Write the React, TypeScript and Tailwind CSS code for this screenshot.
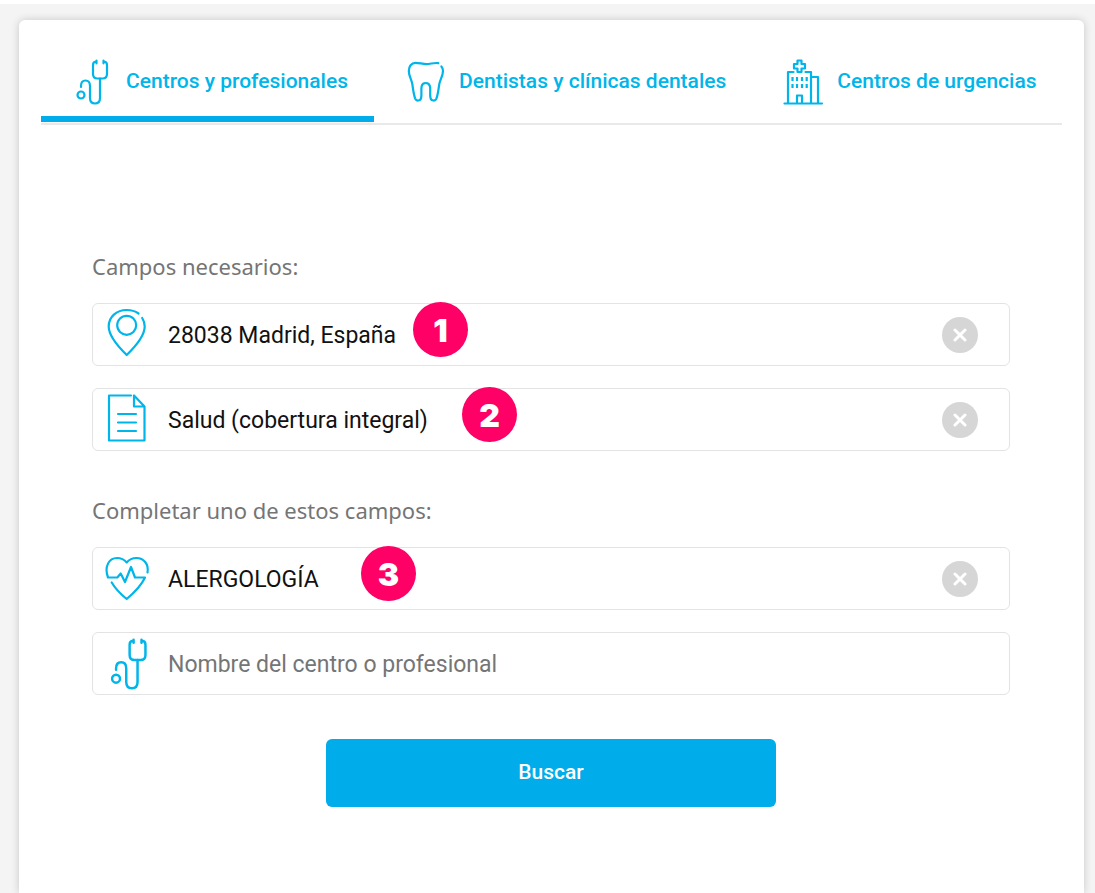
import { useState } from "react";
import type { ReactNode } from "react";

type IconProps = {
  className?: string;
};

function Icon({ viewBox, className, children }: IconProps & { viewBox: string; children: ReactNode }) {
  return (
    <svg
      viewBox={viewBox}
      className={`shrink-0 overflow-visible ${className ?? ""}`}
      fill="none"
      stroke="currentColor"
      strokeWidth="2.2"
      strokeLinecap="round"
      strokeLinejoin="round"
      aria-hidden="true"
    >
      {children}
    </svg>
  );
}

function StethoscopeIcon({ className }: IconProps) {
  return (
    <Icon viewBox="0 0 36 46" className={className}>
      <path d="M22.5 1.5v2.8M22 2.5c-2 .2-3 1.500-3 3.500v9c0 3 1.700 4.500 4.500 4.500h5c2.800 0 4.500-1.500 4.500-4.500V6c0-2-1-3.300-3-3.500M29.500 1.500v2.800" />
      <path d="M26 19.500V39c0 3.500-1.800 5.500-5 5.500s-5-2-5-5.500V27c0-3.500-1.800-5.500-4.500-5.500S7 23.500 7 27v1" />
      <circle cx="7" cy="36" r="3.500" />
    </Icon>
  );
}

function ToothIcon({ className }: IconProps) {
  return (
    <Icon viewBox="0 0 36 46" className={className}>
      <path d="M31.300 4.200c-4-.8-7.800.9-12 .9-3.800 0-7-1.300-10.800-1.300C4.300 3.800 1.800 7.500 1.800 12c0 4.800 2.700 8.500 3.500 13 .8 5 1.200 10 2.800 14.300 1.200 3 5.200 3 6-.2.900-3.700-.2-7.800.5-11.600.4-2.300 2-3.500 4.200-3.500s3.700 1.200 4.200 3.500c.7 3.800-.4 7.900.5 11.600.8 3.200 4.800 3.200 6 .2 1.600-4.300 2-9.300 2.800-14.300.8-4.500 3.700-8.200 3.700-13 0-1.800-.6-3.500-1.600-4.600" />
    </Icon>
  );
}

function HospitalIcon({ className }: IconProps) {
  return (
    <Icon viewBox="1 0 36 46" className={className}>
      <path d="M.5 44.500h37.500M4 44V13h5.500M21.500 13H27v31M27 18h7v26M13 44v-7.500h5V44" />
      <path d="M17.500 5V1.500h-4V5H10v4.500h3.500V13h4V9.500H21V5z" />
      <path strokeLinecap="butt" d="M8.500 18v4M13 18v4M18 18v4M22.700 18v4M8.500 25v4M13 25v4M18 25v4M22.700 25v4" />
    </Icon>
  );
}

function PinIcon({ className }: IconProps) {
  return (
    <Icon viewBox="0 2 44 50" className={className}>
      <path d="M32.500 5.500C29 3 25 2 20.700 2 10.500 2 2.700 9 2.700 18.500 2.700 27.500 11 37.500 20.700 47 30.500 37.500 38.700 27.500 38.700 18.500c0-3.300-.9-6-2.500-8.500" />
      <circle cx="20.700" cy="17.300" r="9.500" />
    </Icon>
  );
}

function DocumentIcon({ className }: IconProps) {
  return (
    <Icon viewBox="0 0 44 50" className={className}>
      <path d="M25 .5H3v45h35.500v-34L28 .5v11h10.500M12 19h18M12 27.500h18M12 36h18" />
    </Icon>
  );
}

function HeartIcon({ className }: IconProps) {
  return (
    <Icon viewBox="0 0 44 50" className={className}>
      <path d="M41.500 18.500C43 10 37.500 4 30.500 4c-4 0-7.300 1.500-9.800 4.500C18.200 5.500 15 4 11 4 3 4-2 12.500 2 23.500h9.300l3.400-4 4.300 8.500 6-15 4 10.500h10c-4 8.500-10.500 15-18.300 21.500C14.500 40 9.500 35 5.700 28.500" />
    </Icon>
  );
}

const tabs = [
  { id: "centros", label: "Centros y profesionales", icon: StethoscopeIcon },
  { id: "dentistas", label: "Dentistas y clínicas dentales", icon: ToothIcon },
  { id: "urgencias", label: "Centros de urgencias", icon: HospitalIcon },
];

function Badge({ className, children }: { className: string; children: ReactNode }) {
  return (
    <span
      className={`absolute -top-[2px] flex size-[55px] items-center justify-center rounded-full bg-[#ff0066] pt-[3px] font-[Inter,sans-serif] text-[32px] font-black text-white ${className}`}
    >
      {children}
    </span>
  );
}

type FieldProps = {
  label: string;
  initial?: string;
  icon: ReactNode;
  badge?: ReactNode;
};

function Field({ label, initial = "", icon, badge }: FieldProps) {
  const [value, setValue] = useState(initial);

  return (
    <div className="relative flex h-[63px] items-center gap-[18px] rounded-md border border-[#e3e3e3] bg-white pl-[13px] pr-[31px]">
      <span className="flex w-11 shrink-0 justify-center text-[#00b5e9]">{icon}</span>
      <input
        type="text"
        aria-label={label}
        placeholder={label}
        value={value}
        onChange={(e) => setValue(e.target.value)}
        className="min-w-0 flex-1 bg-transparent pt-[3px] text-[23px] text-[#111111] outline-none placeholder:text-[#757575]"
      />
      {value && (
        <button
          type="button"
          aria-label={`Borrar ${label}`}
          onClick={() => setValue("")}
          className="flex size-9 shrink-0 items-center justify-center rounded-full bg-[#d6d6d6] text-white"
        >
          <svg viewBox="0 0 14 14" className="size-[14px]" stroke="currentColor" strokeWidth="3" strokeLinecap="round" aria-hidden="true">
            <path d="M2 2l10 10M12 2L2 12" />
          </svg>
        </button>
      )}
      {badge}
    </div>
  );
}

function FieldGroup({ title, children }: { title: string; children: ReactNode }) {
  return (
    <fieldset>
      <legend className="mb-[21px] font-['Noto_Sans',sans-serif] text-[22px] leading-8 text-[#757575]">{title}</legend>
      <div className="flex flex-col gap-[22px]">{children}</div>
    </fieldset>
  );
}

export default function App() {
  const [active, setActive] = useState("centros");

  return (
    <div className="flex min-h-screen flex-col border-t-4 border-white bg-[#f4f4f4] font-[Roboto,sans-serif]">
      <main className="ml-[19px] mr-[11px] mt-4 flex-1 rounded-t-md bg-white shadow-[0_0_8px_rgba(0,0,0,0.18)]">
        <div role="tablist" className="mx-[22px] flex border-b-2 border-[#e9e9e9] pb-px">
          {tabs.map(({ id, label, icon: TabIcon }) => (
            <button
              key={id}
              type="button"
              role="tab"
              aria-selected={active === id}
              onClick={() => setActive(id)}
              className={`flex grow items-center gap-4 border-b-6 pb-[11px] pl-[33px] pr-[26px] pt-[39px] text-[21px] font-medium whitespace-nowrap text-[#00b5e9] ${
                active === id ? "border-[#00ace9]" : "border-transparent"
              }`}
            >
              <TabIcon className="h-[46px] w-9" />
              {label}
            </button>
          ))}
        </div>

        <form className="pb-20 pl-[73px] pr-[74px] pt-[125px]" onSubmit={(e) => e.preventDefault()}>
          <div className="flex flex-col gap-[43px]">
            <FieldGroup title="Campos necesarios:">
              <Field
                label="Código postal o población"
                initial="28038 Madrid, España"
                icon={<PinIcon className="h-[50px] w-11" />}
                badge={<Badge className="left-[320px]">1</Badge>}
              />
              <Field
                label="Tipo de seguro"
                initial="Salud (cobertura integral)"
                icon={<DocumentIcon className="h-[50px] w-11" />}
                badge={<Badge className="left-[369px]">2</Badge>}
              />
            </FieldGroup>
            <FieldGroup title="Completar uno de estos campos:">
              <Field
                label="Especialidad"
                initial="ALERGOLOGÍA"
                icon={<HeartIcon className="h-[50px] w-11" />}
                badge={<Badge className="left-[268px]">3</Badge>}
              />
              <Field label="Nombre del centro o profesional" icon={<StethoscopeIcon className="h-[52px] w-[41px]" />} />
            </FieldGroup>
          </div>
          <button
            type="submit"
            className="mx-auto mt-11 block h-[68px] w-full max-w-[450px] rounded-md bg-[#00ace9] text-[21px] font-medium text-white"
          >
            Buscar
          </button>
        </form>
      </main>
    </div>
  );
}
